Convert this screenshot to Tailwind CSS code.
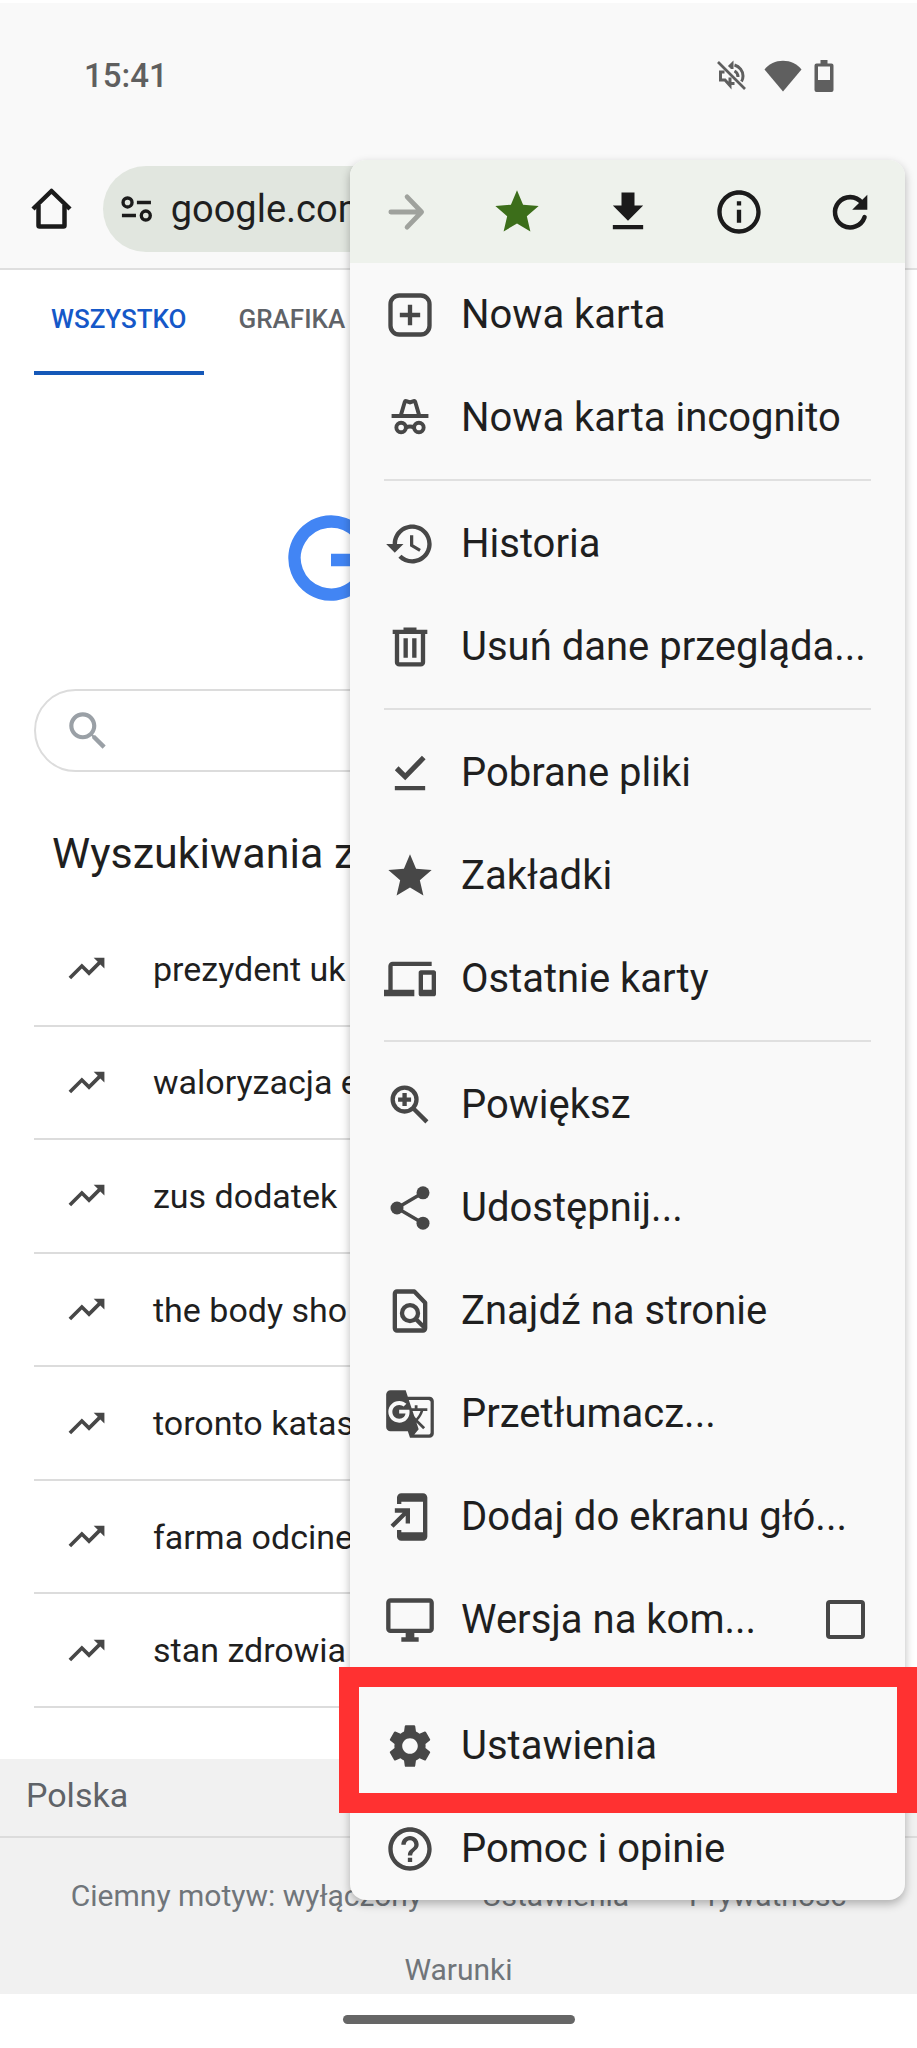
<!DOCTYPE html>
<html lang="pl">
<head>
<meta charset="utf-8">
<meta name="viewport" content="width=device-width, initial-scale=1">
<title>Google</title>
<script src="https://cdn.jsdelivr.net/npm/@tailwindcss/browser@4"></script>
</head>
<body class="bg-white font-[Roboto,sans-serif] text-[#1f1f1f]">
<svg class="hidden" aria-hidden="true">
  <symbol id="trend" viewBox="0 0 24 24"><path fill="currentColor" d="M16 6l2.290 2.290-4.880 4.880-4-4L2 16.590 3.410 18l6-6 4 4 6.300-6.290L22 12V6z"/></symbol>
  <symbol id="star" viewBox="0 0 24 24"><path fill="currentColor" d="M12 17.270L18.180 21l-1.640-7.030L22 9.240l-7.190-.61L12 2 9.190 8.630 2 9.240l5.460 4.730L5.820 21z"/></symbol>
</svg>
<div class="relative overflow-hidden pt-[3px]">

  <header class="border-b-2 border-[#dfdfdf] bg-[#f9f9f9]">
    <div class="flex h-[146px] items-center justify-between pr-[83px] pl-[84px] text-[#5f5f5f]">
      <time class="text-[33px] leading-10 font-medium">15:41</time>
      <div class="flex items-center gap-4">
        <svg class="size-8" viewBox="0 0 32 32" fill="none" stroke="currentColor" stroke-width="3" aria-label="Wyciszony"><path d="M2 2L29 29" stroke-width="2.600"/><path d="M8.500 12H4.500v8h4.500l5 5.500v-8M13 7l3-3v5M17 25v-3"/><path d="M18.500 5c5 1.500 8.500 6 8.500 11 0 2-.5 4-1.500 5.500M18.500 11c2 1 3.500 3 3.500 6"/></svg>
        <svg class="h-8 w-[38px]" viewBox="0 0 38 32" fill="currentColor" aria-label="Wi-Fi"><path d="M19 31.500L.5 9.500C5 4 11.500.8 19 .8S33 4 37.500 9.500z"/></svg>
        <svg class="-ml-1 h-[34px] w-5" viewBox="0 0 20 34" fill="currentColor" aria-label="Bateria"><path fill-rule="evenodd" d="M6.500 1h7v3.500H17.500a2 2 0 0 1 2 2V31a2 2 0 0 1-2 2H2.500a2 2 0 0 1-2-2V6.500a2 2 0 0 1 2-2h4zM4 7.500V21h12V7.500z"/></svg>
      </div>
    </div>
    <div class="flex h-[119px] items-center gap-[26px] pr-6 pl-[25px]">
      <button type="button" aria-label="Strona główna">
        <svg class="size-[52px]" viewBox="0 0 52 52" fill="none" stroke="#1b1b1b" stroke-width="4.500" stroke-linejoin="round"><path d="M8 26L26.500 8 45 26"/><path d="M13.500 22v20.500a1 1 0 0 0 1 1h24a1 1 0 0 0 1-1V22"/></svg>
      </button>
      <div class="flex h-[86px] flex-1 items-center rounded-full bg-[#e1e6df] pl-[18px]">
        <svg class="h-8 w-9" viewBox="0 0 36 32" fill="none" stroke="#1b1b1b" stroke-width="3.600" aria-hidden="true"><circle cx="7" cy="9" r="4.800"/><circle cx="26.500" cy="23" r="4.800"/><path d="M17 9h15M1 23h15"/></svg>
        <input type="text" aria-label="Adres" value="google.com" class="ml-4 w-full min-w-0 bg-transparent text-[38px] leading-[48px] outline-none">
      </div>
    </div>
  </header>

  <main class="px-[34px]">
    <nav class="flex text-[26px] leading-[34px] font-medium text-[#5f6368]">
      <a href="#" class="border-b-4 border-[#1558b8] px-[17px] pt-8 pb-[35px] text-[#1558c8]">WSZYSTKO</a>
      <a href="#" class="border-b-4 border-transparent px-[35px] pt-8 pb-[35px]">GRAFIKA</a>
    </nav>

    <div class="mt-[140px] flex justify-center">
      <svg class="h-[86px] w-[341px]" viewBox="0 0 341 86" fill="none" stroke="#4285f4" stroke-width="12.500" aria-label="Google"><path d="M69 17.400A36.500 36.500 0 1 0 79.500 45H43"/></svg>
    </div>

    <form class="mt-[88px] flex h-[83px] items-center rounded-full border-2 border-[#dcdcdc] pl-[27px]">
      <svg class="size-[50px]" viewBox="0 0 24 24" fill="#9aa0a6" aria-hidden="true"><path d="M15.500 14h-.79l-.28-.27C15.410 12.590 16 11.110 16 9.500 16 5.910 13.090 3 9.500 3S3 5.910 3 9.500 5.910 16 9.500 16c1.610 0 3.090-.59 4.230-1.570l.27.28v.79l5 4.990L20.490 19l-4.990-5zm-6 0C7.010 14 5 11.990 5 9.500S7.010 5 9.500 5 14 7.010 14 9.500 11.990 14 9.500 14z"/></svg>
      <input type="search" aria-label="Szukaj" class="h-full min-w-0 flex-1 bg-transparent px-4 text-[34px] outline-none">
    </form>

    <h1 class="mt-[53px] pl-[18px] text-[43px] leading-[56px]">Wyszukiwania z</h1>
    <ul class="mt-8 flex h-[795px] flex-col text-[34px] leading-10">
      <li class="flex-1 border-b-2 border-[#dcdcdc]"><a href="#" class="flex h-full items-center gap-[45px] pl-[31px]"><svg class="size-[43px] text-[#474747]"><use href="#trend"/></svg>prezydent uk</a></li>
      <li class="flex-1 border-b-2 border-[#dcdcdc]"><a href="#" class="flex h-full items-center gap-[45px] pl-[31px]"><svg class="size-[43px] text-[#474747]"><use href="#trend"/></svg>waloryzacja e</a></li>
      <li class="flex-1 border-b-2 border-[#dcdcdc]"><a href="#" class="flex h-full items-center gap-[45px] pl-[31px]"><svg class="size-[43px] text-[#474747]"><use href="#trend"/></svg>zus dodatek</a></li>
      <li class="flex-1 border-b-2 border-[#dcdcdc]"><a href="#" class="flex h-full items-center gap-[45px] pl-[31px]"><svg class="size-[43px] text-[#474747]"><use href="#trend"/></svg>the body sho</a></li>
      <li class="flex-1 border-b-2 border-[#dcdcdc]"><a href="#" class="flex h-full items-center gap-[45px] pl-[31px]"><svg class="size-[43px] text-[#474747]"><use href="#trend"/></svg>toronto katas</a></li>
      <li class="flex-1 border-b-2 border-[#dcdcdc]"><a href="#" class="flex h-full items-center gap-[45px] pl-[31px]"><svg class="size-[43px] text-[#474747]"><use href="#trend"/></svg>farma odcine</a></li>
      <li class="flex-1 border-b-2 border-[#dcdcdc]"><a href="#" class="flex h-full items-center gap-[45px] pl-[31px]"><svg class="size-[43px] text-[#474747]"><use href="#trend"/></svg>stan zdrowia</a></li>
    </ul>
  </main>

  <footer class="mt-[51px] bg-[#f1f1f1]">
    <p class="border-b-2 border-[#dcdcdc] px-[26px] pt-4 pb-5 text-[34px] leading-[41px] text-[#5f6368]">Polska</p>
    <div class="flex flex-wrap justify-center gap-x-[60px] gap-y-[38px] px-[34px] pt-10 pb-[6px] text-[30px] leading-9 text-[#70757a]">
      <a href="#">Ciemny motyw: wyłączony</a>
      <a href="#">Ustawienia</a>
      <a href="#">Prywatność</a>
      <a href="#">Warunki</a>
    </div>
  </footer>
  <div class="flex h-[54px] items-start justify-center bg-white pt-[21px]"><div class="h-[9px] w-[232px] rounded-full bg-[#666]"></div></div>

  <div role="menu" class="absolute top-[160px] right-3 w-[555px] rounded-2xl bg-[#f9f9f9] shadow-[0_4px_10px_rgba(0,0,0,0.28)]">
    <div class="grid h-[103px] grid-cols-5 place-items-center rounded-t-2xl bg-[#eef2ec] text-[#1b1b1b]">
      <button type="button" aria-label="Dalej"><svg class="size-[52px]" viewBox="0 0 24 24" fill="none" stroke="#9fa29d" stroke-width="2.200" stroke-linecap="round" stroke-linejoin="round"><path d="M5 12h14M12.500 5l6.700 7-6.700 7"/></svg></button>
      <button type="button" aria-label="Dodaj zakładkę"><svg class="size-[52px] text-[#3c6e1a]"><use href="#star"/></svg></button>
      <button type="button" aria-label="Pobierz"><svg class="size-[52px]" viewBox="0 0 24 24" fill="currentColor"><path d="M19 9h-4V3H9v6H5l7 7zM5 18v2h14v-2z"/></svg></button>
      <button type="button" aria-label="Informacje"><svg class="size-[52px]" viewBox="0 0 24 24" fill="currentColor"><path d="M11 7h2v2h-2zm0 4h2v6h-2zm1-9C6.480 2 2 6.480 2 12s4.480 10 10 10 10-4.480 10-10S17.520 2 12 2zm0 18c-4.410 0-8-3.590-8-8s3.590-8 8-8 8 3.590 8 8-3.590 8-8 8z"/></svg></button>
      <button type="button" aria-label="Odśwież"><svg class="size-[52px]" viewBox="0 0 24 24"><path d="M17.500 7.700A7 7 0 1 0 18.700 14.400" fill="none" stroke="currentColor" stroke-width="2.100" stroke-linecap="round"/><path d="M20 4v7h-7z" fill="currentColor"/></svg></button>
    </div>
    <div class="text-[40px] leading-[48px] text-[#1f1f1f]">
      <button type="button" role="menuitem" class="flex h-[103px] w-full items-center gap-[25px] px-[34px] text-left"><svg class="size-[52px] shrink-0" viewBox="0 0 24 24" fill="none" stroke="#474747" stroke-width="2"><rect x="3" y="3" width="18" height="18" rx="4"/><path d="M12 7.300v9.400M7.300 12h9.400"/></svg>Nowa karta</button>
      <button type="button" role="menuitem" class="flex h-[103px] w-full items-center gap-[25px] px-[34px] text-left"><svg class="size-[52px] shrink-0" viewBox="0 0 24 24" fill="none" stroke="#474747" stroke-width="1.800"><path d="M3.500 11.100h17"/><path d="M7.700 11L9.600 4.500c.1-.3.400-.4.700-.3l1.700.6 1.700-.6c.3-.1.600 0 .7.300L16.300 11"/><circle cx="7.900" cy="16.400" r="2.200"/><circle cx="16.100" cy="16.400" r="2.200"/><path d="M10.200 16.400q1.800-1 3.600 0"/></svg>Nowa karta incognito</button>
      <hr class="mx-[34px] mt-[10px] mb-[11px] border-0 border-t-2 border-[#e0e0e0]">
      <button type="button" role="menuitem" class="flex h-[103px] w-full items-center gap-[25px] px-[34px] text-left"><svg class="size-[52px] shrink-0" viewBox="0 0 24 24" fill="#474747"><path d="M13 3c-4.970 0-9 4.030-9 9H1l3.890 3.890.07.14L9 12H6c0-3.870 3.130-7 7-7s7 3.130 7 7-3.130 7-7 7c-1.930 0-3.680-.79-4.940-2.060l-1.420 1.420C8.270 19.990 10.510 21 13 21c4.970 0 9-4.030 9-9s-4.030-9-9-9zm-1 5v5l4.280 2.540.72-1.210-3.500-2.080V8z"/></svg>Historia</button>
      <button type="button" role="menuitem" class="flex h-[103px] w-full items-center gap-[25px] px-[34px] text-left"><svg class="size-[52px] shrink-0" viewBox="0 0 24 24" fill="#474747"><path fill-rule="evenodd" d="M7 21q-.82 0-1.410-.59T5 19V6H4V4h5V3h6v1h5v2h-1v13q0 .82-.59 1.410T17 21zM17 6H7v13h10zM9 17h2V8H9zm4 0h2V8h-2z"/></svg>Usuń dane przegląda...</button>
      <hr class="mx-[34px] mt-[10px] mb-[11px] border-0 border-t-2 border-[#e0e0e0]">
      <button type="button" role="menuitem" class="flex h-[103px] w-full items-center gap-[25px] px-[34px] text-left"><svg class="size-[52px] shrink-0" viewBox="0 0 24 24" fill="#474747"><path d="M5 10.700l1.700-1.800 3.100 3.100 7.700-8L19.200 5.700 9.800 15.400zM5 18h14v2H5z"/></svg>Pobrane pliki</button>
      <button type="button" role="menuitem" class="flex h-[103px] w-full items-center gap-[25px] px-[34px] text-left"><svg class="size-[52px] shrink-0 text-[#474747]"><use href="#star"/></svg>Zakładki</button>
      <button type="button" role="menuitem" class="flex h-[103px] w-full items-center gap-[25px] px-[34px] text-left"><svg class="size-[52px] shrink-0" viewBox="0 0 24 24" fill="#474747"><path d="M4 6h18V4H4c-1.100 0-2 .9-2 2v11H0v3h14v-3H4zm19 2h-6c-.55 0-1 .45-1 1v10c0 .55.450 1 1 1h6c.55 0 1-.45 1-1V9c0-.55-.45-1-1-1zm-1 9h-4v-7h4z"/></svg>Ostatnie karty</button>
      <hr class="mx-[34px] mt-[10px] mb-[11px] border-0 border-t-2 border-[#e0e0e0]">
      <button type="button" role="menuitem" class="flex h-[103px] w-full items-center gap-[25px] px-[34px] text-left"><svg class="size-[52px] shrink-0" viewBox="0 0 24 24" fill="none" stroke="#474747" stroke-width="2"><circle cx="9.500" cy="9.500" r="5.500"/><path d="M13.700 13.700l6.100 6.100M9.500 6.500v6M6.500 9.500h6"/></svg>Powiększ</button>
      <button type="button" role="menuitem" class="flex h-[103px] w-full items-center gap-[25px] px-[34px] text-left"><svg class="size-[52px] shrink-0" viewBox="0 0 24 24" fill="#474747"><circle cx="18" cy="5" r="3"/><circle cx="6" cy="12" r="3"/><circle cx="18" cy="19" r="3"/><path d="M18 5L6 12l12 7" fill="none" stroke="#474747" stroke-width="1.600"/></svg>Udostępnij...</button>
      <button type="button" role="menuitem" class="flex h-[103px] w-full items-center gap-[25px] px-[34px] text-left"><svg class="size-[52px] shrink-0" viewBox="0 0 24 24" fill="none" stroke="#474747" stroke-width="2" stroke-linejoin="round"><path d="M14 3H6a1 1 0 0 0-1 1v16a1 1 0 0 0 1 1h12a1 1 0 0 0 1-1V8.200z"/><circle cx="12" cy="13" r="3.700"/><path d="M14.800 15.800L19 20"/></svg>Znajdź na stronie</button>
      <button type="button" role="menuitem" class="flex h-[103px] w-full items-center gap-[25px] px-[34px] text-left"><svg class="size-[52px] shrink-0" viewBox="0 0 24 24" fill="#474747"><path d="M21 4H11l-1-3H3c-1.100 0-2 .9-2 2v15c0 1.100.9 2 2 2h8l1 3h9c1.100 0 2-.9 2-2V6c0-1.100-.9-2-2-2zM7 16c-2.760 0-5-2.240-5-5s2.240-5 5-5c1.350 0 2.480.5 3.350 1.300L9.030 8.570c-.38-.36-1.040-.78-2.030-.78-1.740 0-3.150 1.440-3.150 3.210S5.260 14.210 7 14.210c2.010 0 2.840-1.440 2.920-2.410H7v-1.710h4.680c.07.31.12.61.12 1.020C11.800 13.970 9.890 16 7 16zm6.170-5.420h3.700c-.43 1.250-1.110 2.430-2.050 3.470-.31-.35-.6-.72-.86-1.100l-.79-2.370zm8.330 9.920c0 .55-.45 1-1 1H14l2-2.500-1.040-3.100 3.100 3.100.92-.92-3.300-3.250.02-.02c1.130-1.250 1.930-2.690 2.400-4.220H20v-1.300h-4.530V8h-1.290v1.290h-1.440L11.460 5.500h9.040c.55 0 1 .45 1 1v14z"/></svg>Przetłumacz...</button>
      <button type="button" role="menuitem" class="flex h-[103px] w-full items-center gap-[25px] px-[34px] text-left"><svg class="size-[52px] shrink-0" viewBox="0 0 24 24" fill="#474747"><path d="M18 1H8c-1.100 0-2 .9-2 2v3h2V5h10v14H8v-1H6v3c0 1.100.9 2 2 2h10c1.100 0 2-.9 2-2V3c0-1.100-.9-2-2-2zM10 15h2V8H5v2h3.590L3 15.590 4.410 17 10 11.410z"/></svg>Dodaj do ekranu głó...</button>
      <div class="flex h-[103px] w-full items-center gap-[25px] pr-10 pl-[34px]"><svg class="size-[52px] shrink-0" viewBox="0 0 24 24" fill="#474747"><path d="M21 2H3c-1.100 0-2 .9-2 2v12c0 1.100.9 2 2 2h7v2H8v2h8v-2h-2v-2h7c1.100 0 2-.9 2-2V4c0-1.100-.9-2-2-2zm0 14H3V4h18z"/></svg><label for="desktop" class="flex-1">Wersja na kom...</label><input id="desktop" type="checkbox" class="size-[39px] appearance-none rounded border-4 border-[#474747]"></div>
      <hr class="mx-[34px] mt-[10px] mb-[11px] border-0 border-t-2 border-[#e0e0e0]">
      <div class="relative">
        <button type="button" role="menuitem" class="flex h-[103px] w-full items-center gap-[25px] px-[34px] text-left"><svg class="size-[52px] shrink-0" viewBox="0 0 24 24" fill="#474747"><path d="M19.140 12.940c.04-.3.060-.61.060-.94 0-.32-.02-.64-.07-.94l2.030-1.580c.18-.14.230-.41.120-.61l-1.920-3.320c-.12-.22-.37-.29-.59-.22l-2.390.96c-.5-.38-1.030-.7-1.620-.94l-.36-2.540c-.04-.24-.24-.41-.48-.41h-3.840c-.24 0-.43.17-.47.410l-.36 2.540c-.59.24-1.130.57-1.620.94l-2.390-.96c-.22-.08-.47 0-.59.220L2.740 8.870c-.12.21-.08.47.12.610l2.030 1.580c-.05.3-.09.63-.09.94s.02.64.07.940l-2.030 1.580c-.18.14-.23.41-.12.610l1.920 3.320c.12.22.370.29.590.220l2.390-.96c.5.380 1.030.7 1.620.94l.36 2.540c.05.24.240.41.480.41h3.840c.24 0 .44-.17.470-.41l.36-2.540c.59-.24 1.130-.56 1.620-.94l2.390.96c.22.08.470 0 .590-.22l1.920-3.320c.12-.22.070-.47-.12-.61zM12 15.600c-1.980 0-3.600-1.620-3.600-3.600s1.620-3.600 3.600-3.600 3.600 1.620 3.600 3.600-1.620 3.600-3.600 3.600z"/></svg>Ustawienia</button>
        <div class="pointer-events-none absolute -top-[27px] -right-3 -bottom-4 -left-[11px] border-20 border-[#ff3131]"></div>
      </div>
      <button type="button" role="menuitem" class="flex h-[103px] w-full items-center gap-[25px] px-[34px] text-left"><svg class="size-[52px] shrink-0" viewBox="0 0 24 24" fill="#474747"><path d="M11 18h2v-2h-2zm1-16C6.480 2 2 6.480 2 12s4.480 10 10 10 10-4.480 10-10S17.520 2 12 2zm0 18c-4.410 0-8-3.590-8-8s3.590-8 8-8 8 3.590 8 8-3.590 8-8 8zm0-14c-2.210 0-4 1.790-4 4h2c0-1.100.9-2 2-2s2 .9 2 2c0 2-3 1.750-3 5h2c0-2.250 3-2.500 3-5 0-2.210-1.790-4-4-4z"/></svg>Pomoc i opinie</button>
    </div>
  </div>
</div>
</body>
</html>
